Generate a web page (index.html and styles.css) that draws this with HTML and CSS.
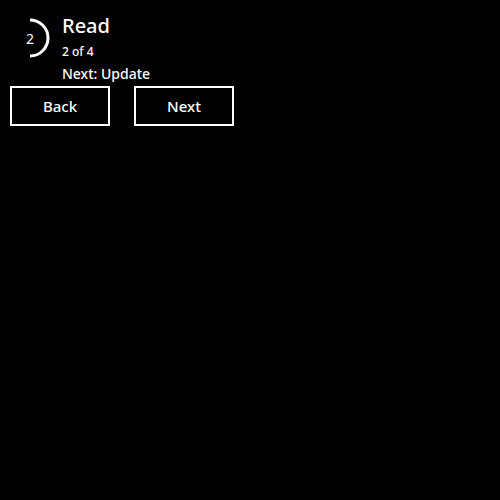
FILE: index.html
```html
<!DOCTYPE html>
<html lang="en">
<head>
<meta charset="utf-8">
<title>Steps</title>
<link rel="stylesheet" href="styles.css">
</head>
<body>
<div class="stepper">
  <div class="header">
    <div class="progress">
      <svg width="40" height="40" viewBox="0 0 40 40" aria-hidden="true">
        <path d="M20 2 A18 18 0 0 1 20 38" fill="none" stroke="#fff" stroke-width="3"/>
      </svg>
      <span class="progress-num">2</span>
    </div>
    <div class="info">
      <div class="title">Read</div>
      <div class="count">2 of 4</div>
      <div class="next-label">Next: Update</div>
    </div>
  </div>
  <div class="actions">
    <button class="btn">Back</button>
    <button class="btn">Next</button>
  </div>
</div>
</body>
</html>
```
FILE: styles.css
```css
html, body {
  margin: 0;
  background: #000;
  color: #fff;
  font-family: "Noto Sans", "Open Sans", sans-serif;
}
.stepper {
  padding: 10px;
}
.header {
  display: flex;
  align-items: flex-start;
  gap: 12px;
}
.progress {
  position: relative;
  width: 40px;
  height: 40px;
  margin-top: 8px;
  flex: none;
}
.progress svg {
  display: block;
}
.progress-num {
  position: absolute;
  inset: 0;
  display: flex;
  align-items: center;
  justify-content: center;
  font-size: 14px;
  font-weight: 400;
}
.info {
  display: flex;
  flex-direction: column;
}
.title {
  font-size: 20px;
  line-height: 28px;
  font-weight: 500;
  margin-top: 2px;
}
.count {
  font-size: 12px;
  line-height: 24px;
  font-weight: 500;
}
.next-label {
  font-size: 14px;
  line-height: 19px;
  font-weight: 500;
}
.actions {
  display: flex;
  gap: 24px;
  margin-top: 3px;
}
.btn {
  box-sizing: border-box;
  width: 100px;
  height: 40px;
  background: #000;
  color: #fff;
  border: 2px solid #fff;
  border-radius: 0;
  font-family: inherit;
  font-size: 15px;
  font-weight: 500;
  padding: 0;
  cursor: pointer;
}
```
